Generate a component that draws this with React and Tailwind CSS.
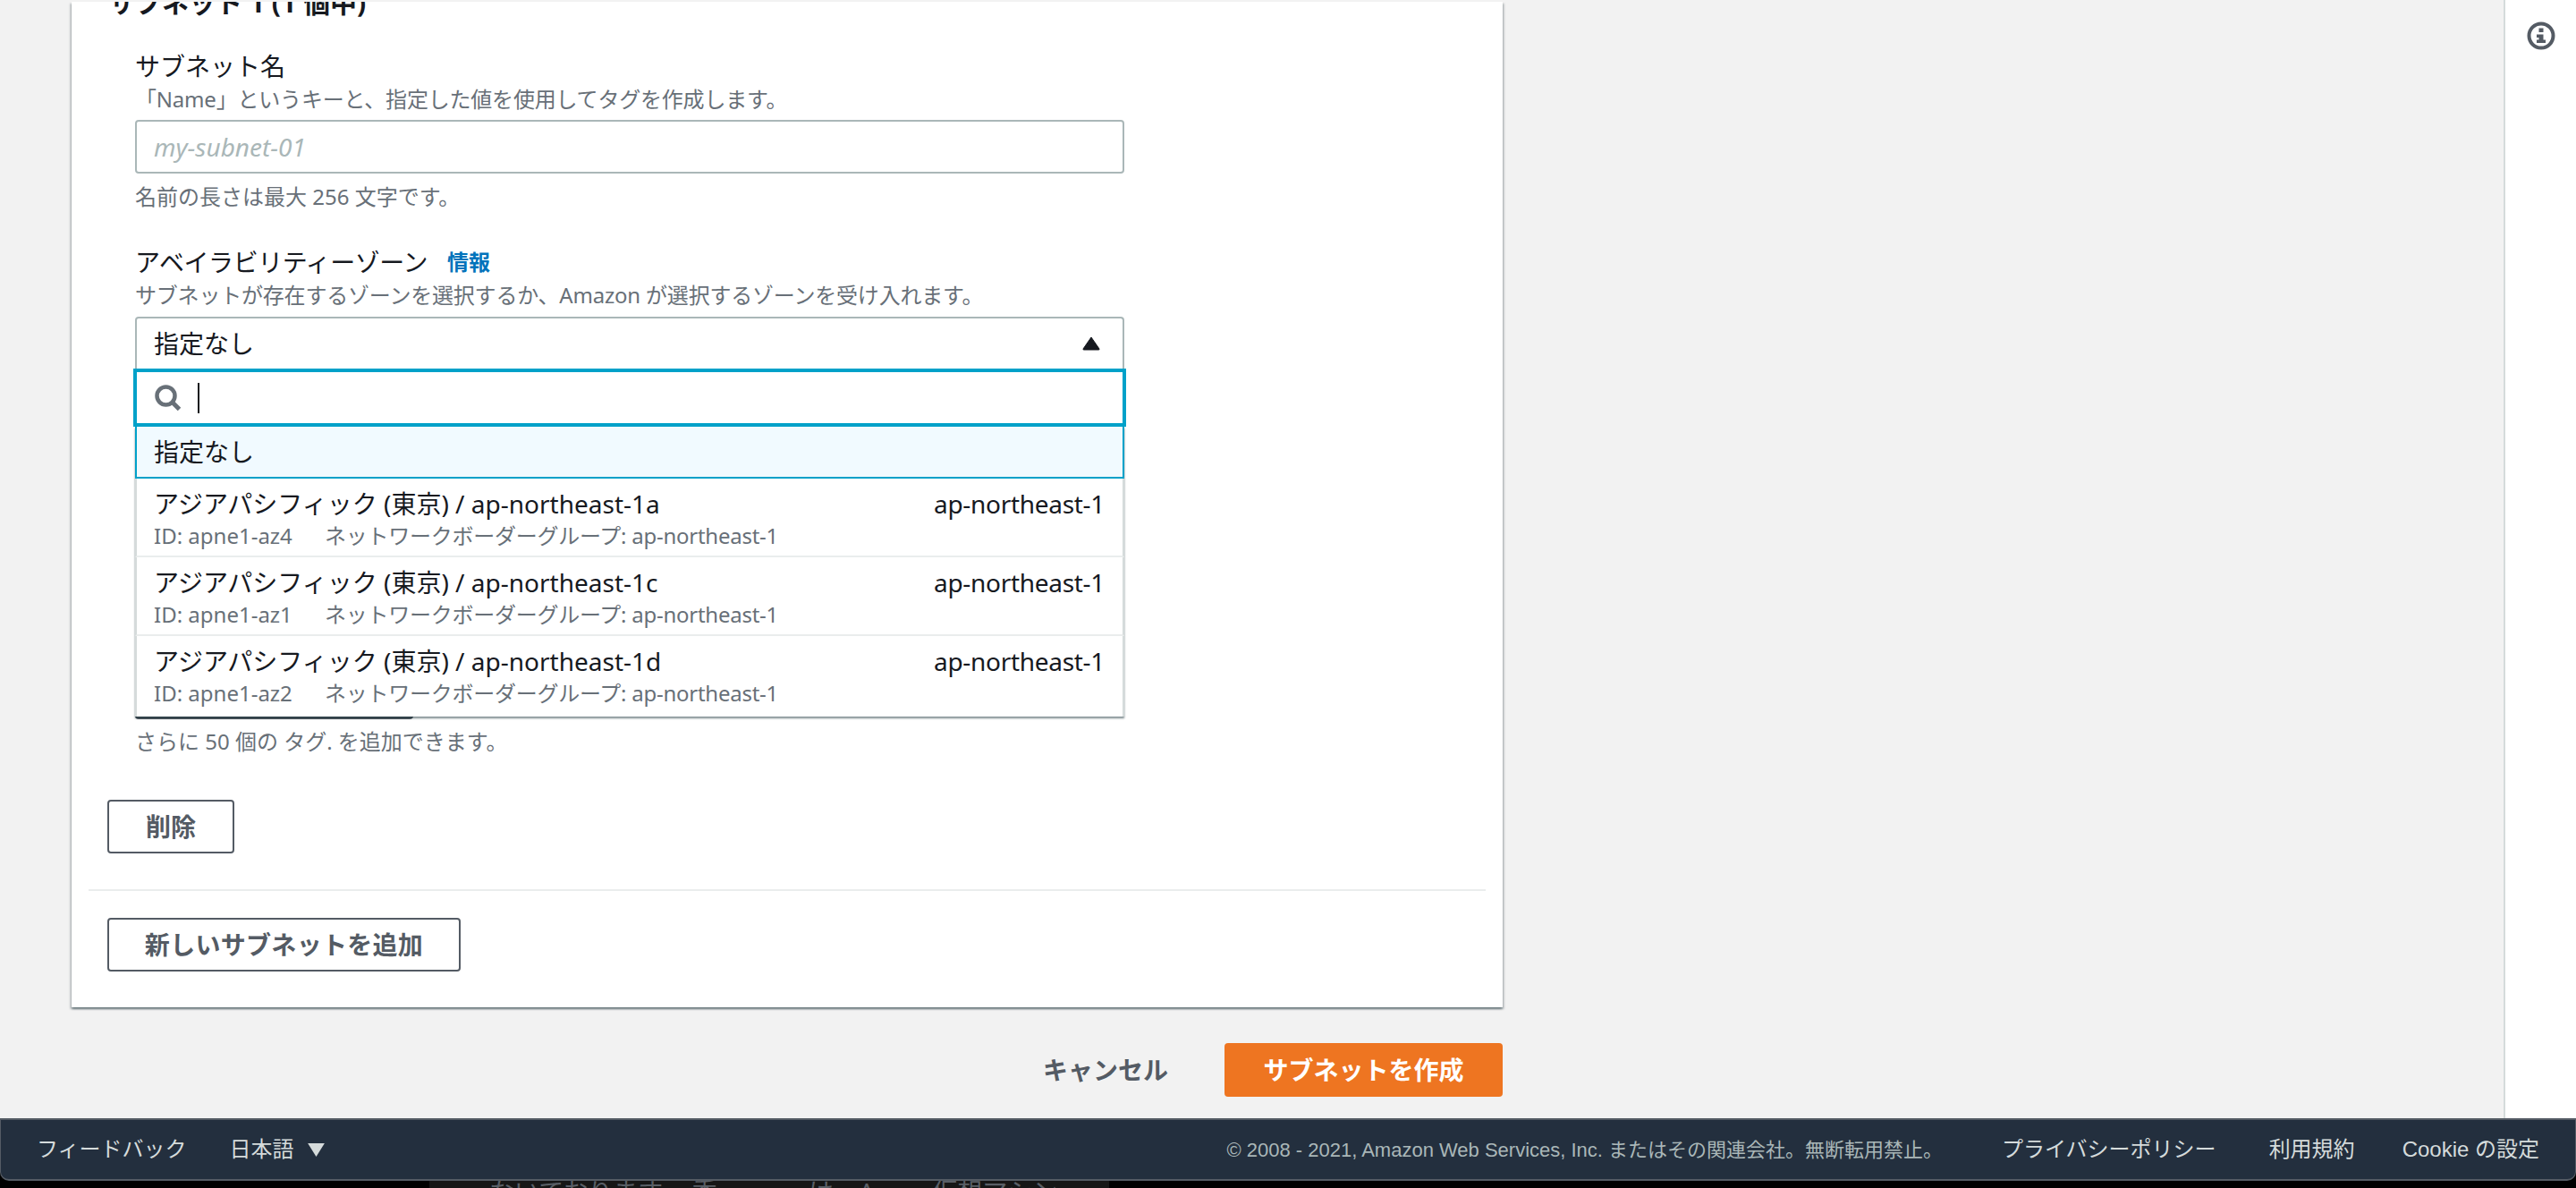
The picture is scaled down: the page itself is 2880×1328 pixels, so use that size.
const sans = "font-['Noto_Sans','Noto_Sans_CJK_JP',sans-serif]";

const zones = [
  { name: "1a", id: "apne1-az4" },
  { name: "1c", id: "apne1-az1" },
  { name: "1d", id: "apne1-az2" },
];

const Caret = ({ className }) => (
  <svg viewBox="0 0 20 16" className={className} fill="currentColor">
    <path d="M10 1 L19 14 Q19.5 15 18 15 L2 15 Q.5 15 1 14 Z" stroke="currentColor" strokeLinejoin="round" />
  </svg>
);

const SearchIcon = () => (
  <svg viewBox="0 0 30 30" className="h-[30px] w-[30px] shrink-0 text-[#687078]" fill="none" stroke="currentColor">
    <circle cx="12.5" cy="12.5" r="10" strokeWidth="4.5" />
    <path d="M19.5 19.5L27.5 27.5" strokeWidth="5" />
  </svg>
);

const OutlineButton = ({ children, className }) => (
  <button className={`h-[60px] rounded border-2 border-[#545b64] bg-white text-[28px] font-bold text-[#545b64] ${className}`}>
    {children}
  </button>
);

const App = () => {
  return (
    <div className={`flex h-[1328px] w-[2880px] flex-col overflow-hidden bg-black ${sans}`}>
      <div className="flex h-[1250px] bg-[#f2f2f2]">
        {/* Main column */}
        <main className="flex-1 overflow-hidden pl-[80px] pt-[2px]">
          <section className="h-[1124px] w-[1600px] bg-white shadow-[0_2px_2px_0_rgba(0,28,36,0.4),2px_2px_2px_0_rgba(0,28,36,0.15),-2px_2px_2px_0_rgba(0,28,36,0.15)]">
            <div className="h-[20px] overflow-hidden pl-[41px]">
              <h2 className="-mt-[21px] text-[30px] font-bold leading-[44px] text-[#16191f]">サブネット 1 (1 個中)</h2>
            </div>

            <div className="pl-[71px] pr-[423px]">
              <label className="mt-[32px] block text-[28px] leading-[40px] text-[#16191f]">サブネット名</label>
              <p className="text-[24px] leading-[34px] tracking-[-0.2px] text-[#687078]">「Name」というキーと、指定した値を使用してタグを作成します。</p>
              <input
                readOnly
                placeholder="my-subnet-01"
                className="mt-[6px] block h-[60px] w-full rounded border-2 border-[#aab7b8] px-[19px] text-[28px] italic placeholder:text-[#aab7b8]"
              />
              <p className="mt-[9px] text-[24px] leading-[34px] text-[#687078]">名前の長さは最大 256 文字です。</p>

              <div className="mt-[36px] flex items-center text-[28px] leading-[40px] tracking-[-0.45px] text-[#16191f]">
                アベイラビリティーゾーン
                <a className="ml-[22px] text-[24px] font-bold tracking-normal text-[#0073bb]">情報</a>
              </div>
              <p className="text-[24px] leading-[34px] tracking-[-0.2px] text-[#687078]">サブネットが存在するゾーンを選択するか、Amazon が選択するゾーンを受け入れます。</p>

              {/* Availability zone select, open */}
              <div className="relative mt-[7px]">
                <div className="flex h-[60px] items-center justify-between rounded-t border-2 border-b-0 border-[#aab7b8] pb-[2px] pl-[19px] pr-[25px] text-[28px] text-[#16191f]">
                  指定なし
                  <Caret className="h-[16px] w-[20px] text-[#16191f]" />
                </div>
                <div className="relative z-10 -mx-[2px] -mt-[2px] flex h-[65px] items-center gap-[18px] border-4 border-[#00a1c9] bg-white pl-[20px]">
                  <SearchIcon />
                  <span className="h-[34px] w-[2px] bg-[#16191f]" />
                </div>
                <div className="absolute inset-x-0 top-[123px] z-10 bg-white shadow-[0_2px_2px_0_rgba(0,28,36,0.5)]">
                  <div className="flex h-[58px] items-center border-2 border-t-0 border-[#00a1c9] bg-[#f1faff] pl-[19px] text-[28px] text-[#16191f]">
                    指定なし
                  </div>
                  {zones.map((zone, i) => (
                    <div
                      key={zone.name}
                      className={`border-x-2 border-[#d5dbdb] pl-[19px] pr-[20px] pt-[8px] ${i < 2 ? "h-[88px] border-b-2 border-b-[#eaeded]" : "h-[90px]"}`}
                    >
                      <div className="flex justify-between text-[28px] leading-[40px] text-[#16191f]">
                        <span>アジアパシフィック (東京) / ap-northeast-{zone.name}</span>
                        <span className="tracking-[-0.3px]">ap-northeast-1</span>
                      </div>
                      <div className="flex text-[24px] leading-[32px] text-[#687078]">
                        <span className="w-[191px]">ID: {zone.id}</span>
                        <span className="tracking-[-0.25px]">ネットワークボーダーグループ: ap-northeast-1</span>
                      </div>
                    </div>
                  ))}
                </div>
              </div>

              {/* Add tag button, mostly behind the open list */}
              <div className="mt-[323px] h-[4px] w-[311px] rounded-b bg-[#545b64]" />
              <p className="mt-[8px] text-[24px] leading-[34px] text-[#687078]">さらに 50 個の タグ. を追加できます。</p>
            </div>

            <div className="pl-[40px] pt-[48px]">
              <OutlineButton className="w-[142px]">削除</OutlineButton>
            </div>
            <div className="mx-[19px] mt-[40px] border-t-2 border-[#eaeded]" />
            <div className="pl-[40px] pt-[30px]">
              <OutlineButton className="w-[395px] tracking-[0.3px]">新しいサブネットを追加</OutlineButton>
            </div>
          </section>

          <div className="flex w-[1600px] items-center justify-end pt-[40px]">
            <button className="mr-[63px] text-[28px] font-bold text-[#545b64]">キャンセル</button>
            <button className="h-[60px] w-[311px] rounded bg-[#ee7521] text-[28px] font-bold text-white">サブネットを作成</button>
          </div>
        </main>

        {/* Tools rail */}
        <aside className="flex w-[81px] justify-center border-l-2 border-[#d5dbdb] bg-white pt-[24px]">
          <svg viewBox="0 0 32 32" className="h-[32px] w-[32px] text-[#545b64]" fill="none" stroke="currentColor">
            <circle cx="16" cy="16" r="13.5" strokeWidth="4" />
            <rect x="13.5" y="7.5" width="5" height="4.5" fill="currentColor" stroke="none" />
            <path d="M11 14.5h7.5v6h2.5v3.5H11v-3.5h2.5v-2.5H11z" fill="currentColor" stroke="none" />
          </svg>
        </aside>
      </div>

      {/* Console footer */}
      <footer className="flex h-[70px] items-center rounded-b-[10px] border-x border-y-2 border-[#545b64] bg-[#232f3e] px-[40px] text-[24px] text-[#d5dbdb] font-['Liberation_Sans','Noto_Sans_CJK_JP',sans-serif]">
        <span>フィードバック</span>
        <span className="ml-[48px] flex items-center gap-[15px]">
          日本語
          <svg viewBox="0 0 20 16" className="h-[15px] w-[19px]" fill="currentColor">
            <path d="M0 0h20L10 16z" />
          </svg>
        </span>
        <span className="ml-auto text-[22px] text-[#aab7b8]">© 2008 - 2021, Amazon Web Services, Inc. またはその関連会社。無断転用禁止。</span>
        <span className="ml-[66px]">プライバシーポリシー</span>
        <span className="ml-[59px]">利用規約</span>
        <span className="ml-[53px]">Cookie の設定</span>
      </footer>
      <div className="ml-[480px] h-[8px] w-[760px] overflow-hidden bg-[#161616] pl-[67px] text-[28px] leading-[28px] text-[#5a5f66]">
        <div className="-mt-[2px] flex">
          <span className="w-[357px]">ないております。 委</span>
          <span>は、Azure 仮想マシン</span>
        </div>
      </div>
    </div>
  );
};

export default App;
